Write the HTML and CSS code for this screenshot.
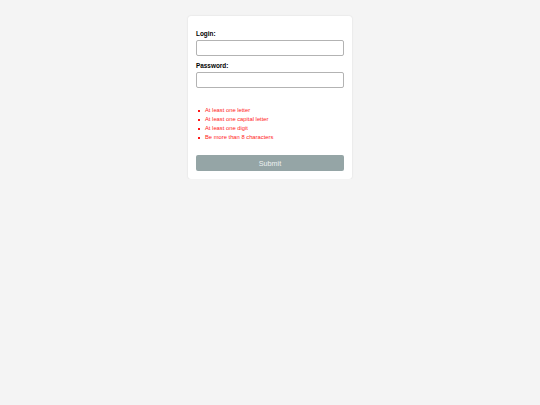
FILE: index.html
```html
<!DOCTYPE html>
<html>
<head>
<meta charset="utf-8">
<link rel="stylesheet" href="styles.css">
</head>
<body>
<div class="page">
  <form class="card">
    <label class="label">Login:</label>
    <input class="field" type="text">
    <label class="label label-second">Password:</label>
    <input class="field" type="password">
    <ul class="rules">
      <li>At least one letter</li>
      <li>At least one capital letter</li>
      <li>At least one digit</li>
      <li>Be more than 8 characters</li>
    </ul>
    <button class="submit" type="button">Submit</button>
  </form>
</div>
</body>
</html>
```
FILE: styles.css
```css
html, body {
  margin: 0;
  padding: 0;
  background: #f4f4f4;
  font-family: "Liberation Sans", Arial, sans-serif;
}
.page {
  display: flex;
  justify-content: center;
  padding-top: 16px;
}
.card {
  width: 148px;
  padding: 14px 8px 8px;
  background: #ffffff;
  border-radius: 3px;
  box-shadow: 0 0 2px rgba(0, 0, 0, 0.12);
  display: flex;
  flex-direction: column;
}
.label {
  display: block;
  font-size: 6.4px;
  font-weight: bold;
  line-height: 8px;
  color: #000;
  margin-bottom: 2px;
}
.label-second {
  margin-top: 6px;
}
.field {
  box-sizing: border-box;
  width: 148px;
  height: 16px;
  margin: 0;
  padding: 0 3px;
  border: 1px solid #b3b3b3;
  border-radius: 2px;
  background: #fff;
  font-size: 7px;
}
.rules {
  list-style: none;
  margin: 18px 0 0;
  padding: 0;
  font-size: 5.8px;
  line-height: 9px;
  color: #ff1a1a;
}
.rules li {
  display: flex;
  align-items: center;
}
.rules li::before {
  content: "";
  width: 2px;
  height: 2px;
  margin: 0 5px 0 2px;
  background: #ff1a1a;
}
.submit {
  margin-top: 13px;
  width: 148px;
  height: 16px;
  padding: 0;
  border: none;
  border-radius: 2px;
  background: #95a5a6;
  color: #eef2f2;
  font-family: "Liberation Sans", Arial, sans-serif;
  font-size: 7.2px;
}
```
